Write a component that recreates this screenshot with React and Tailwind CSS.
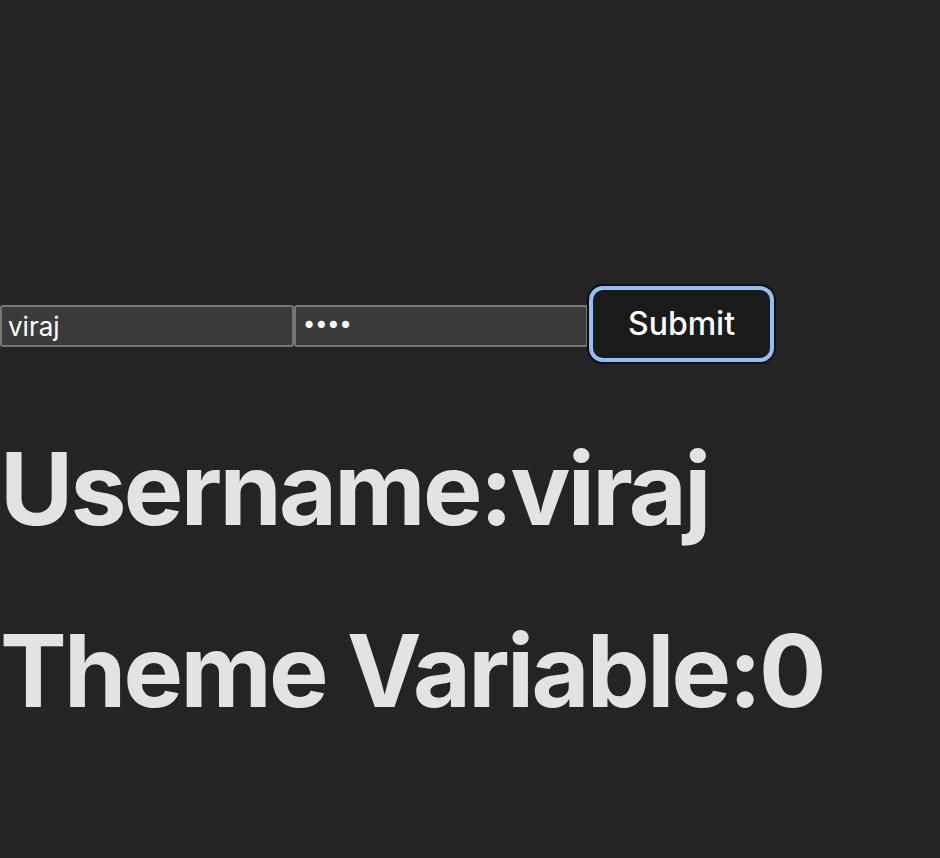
export default function App() {
  return (
    <div className="min-h-[858px] bg-[#242424] text-[#e3e3e3] font-['Inter',sans-serif] overflow-hidden">
      <div className="pt-[286px] flex items-start">
        {/* login inputs */}
        <input
          type="text"
          defaultValue="viraj"
          className="mt-[19px] w-[294px] h-[42px] bg-[#3b3b3b] border-2 border-[#767676] rounded-[3px] px-[6px] text-[26px] text-white outline-none font-['Inter',sans-serif]"
        />
        <input
          type="password"
          defaultValue="1234"
          className="mt-[19px] w-[294px] h-[42px] bg-[#3b3b3b] border-2 border-[#767676] rounded-[3px] px-[6px] text-[24px] tracking-[-2px] text-white outline-none font-['DejaVu_Sans',sans-serif]"
        />
        <button className="ml-[1px] w-[185px] h-[76px] bg-[#1a1a1a] border-4 border-[#93bff7] rounded-[14px] shadow-[0_0_0_2px_#0e0e0e] text-[32px] font-medium text-white leading-none">
          Submit
        </button>
      </div>

      <h1 className="mt-[72px] text-[100px] font-bold leading-[110px] tracking-[-2.7px]">Username:viraj</h1>
      <h1 className="mt-[72px] text-[100px] font-bold leading-[110px] tracking-[-2.7px]">Theme Variable:0</h1>
    </div>
  )
}
